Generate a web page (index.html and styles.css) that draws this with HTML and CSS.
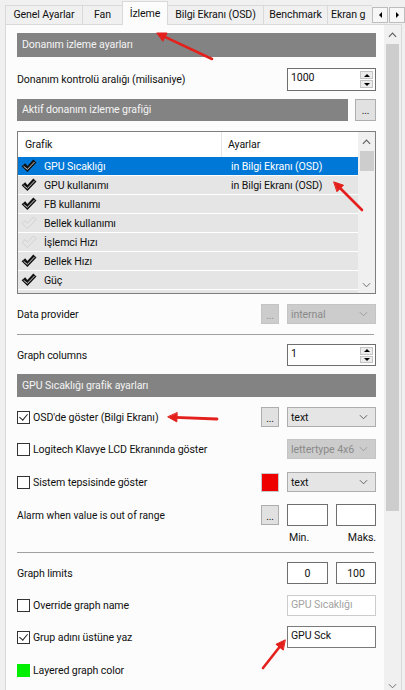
FILE: index.html
```html
<!DOCTYPE html>
<html lang="tr">
<head>
  <meta charset="UTF-8" />
  <meta name="viewport" content="width=device-width, initial-scale=1" />
  <title>İzleme</title>
  <link rel="stylesheet" href="styles.css">
</head>
<body>
  <svg width="0" height="0" class="defs">
    <symbol id="tick" viewBox="0 0 16 14">
      <path d="M0.6 7.2 L4.2 4.2 L6.4 6.9 L12.3 0.6 L15.5 3.5 L6.4 13 Z" fill="#111"/>
      <path d="M2.6 7.3 L6.4 10.4 L13.6 2.9" fill="none" stroke="#fff" stroke-width="0.8"/>
    </symbol>
    <symbol id="tick-off" viewBox="0 0 16 14">
      <path d="M1 7.3 L4.2 4.6 L6.4 7.3 L12.3 1 L15.1 3.5 L6.4 12.5 Z" fill="none" stroke="#cfcfcf" stroke-width="0.9"/>
    </symbol>
    <symbol id="chev-down" viewBox="0 0 10 6">
      <path d="M1 1 L5 5 L9 1" fill="none" stroke="currentColor" stroke-width="1"/>
    </symbol>
    <symbol id="chev-up" viewBox="0 0 10 6">
      <path d="M1 5 L5 1 L9 5" fill="none" stroke="currentColor" stroke-width="1.3"/>
    </symbol>
  </svg>

  <div class="window">
    <div class="tabbar">
      <div class="tabs">
        <div class="tab w-genel first">Genel Ayarlar</div>
        <div class="tab w-fan">Fan</div>
        <div class="tab w-izleme active">İzleme</div>
        <div class="tab w-osd">Bilgi Ekranı (OSD)</div>
        <div class="tab w-bench">Benchmark</div>
        <div class="tab w-ekran">Ekran g</div>
      </div>
      <div class="tab-arrows">
        <span class="tab-arrow"><i class="tri-left"></i></span>
        <span class="tab-arrow"><i class="tri-right"></i></span>
      </div>
    </div>

    <div class="panel">
      <div class="content">
        <div class="section s-first">Donanım izleme ayarları</div>

        <div class="row r-interval">
          <span class="label">Donanım kontrolü aralığı (milisaniye)</span>
          <div class="spin">
            <span>1000</span>
            <div class="spin-btns">
              <span class="spin-btn"><i class="tri-up"></i></span>
              <span class="spin-btn"><i class="tri-down"></i></span>
            </div>
          </div>
        </div>

        <div class="row r-bar">
          <div class="section grow">Aktif donanım izleme grafiği</div>
          <span class="dots big">...</span>
        </div>

        <div class="list">
          <div class="list-main">
            <div class="list-head">
              <span class="col-a">Grafik</span>
              <span class="col-b">Ayarlar</span>
            </div>
            <div class="item selected">
              <span class="tick"><svg width="16" height="14"><use href="#tick"/></svg></span>
              <span class="name">GPU Sıcaklığı</span>
              <span class="set">in Bilgi Ekranı (OSD)</span>
            </div>
            <div class="item">
              <span class="tick"><svg width="16" height="14"><use href="#tick"/></svg></span>
              <span class="name">GPU kullanımı</span>
              <span class="set">in Bilgi Ekranı (OSD)</span>
            </div>
            <div class="item">
              <span class="tick"><svg width="16" height="14"><use href="#tick"/></svg></span>
              <span class="name">FB kullanımı</span>
              <span class="set"></span>
            </div>
            <div class="item">
              <span class="tick"><svg width="16" height="14"><use href="#tick-off"/></svg></span>
              <span class="name">Bellek kullanımı</span>
              <span class="set"></span>
            </div>
            <div class="item">
              <span class="tick"><svg width="16" height="14"><use href="#tick-off"/></svg></span>
              <span class="name">İşlemci Hızı</span>
              <span class="set"></span>
            </div>
            <div class="item">
              <span class="tick"><svg width="16" height="14"><use href="#tick"/></svg></span>
              <span class="name">Bellek Hızı</span>
              <span class="set"></span>
            </div>
            <div class="item">
              <span class="tick"><svg width="16" height="14"><use href="#tick"/></svg></span>
              <span class="name">Güç</span>
              <span class="set"></span>
            </div>
            <div class="item">
              <span class="tick"><svg width="16" height="14"><use href="#tick-off"/></svg></span>
            </div>
          </div>
          <div class="list-sb">
            <span class="sb-btn top"><svg width="9" height="6"><use href="#chev-up"/></svg></span>
            <span class="sb-thumb"></span>
            <span class="sb-btn bottom"><svg width="9" height="6"><use href="#chev-down"/></svg></span>
          </div>
        </div>

        <div class="row r-provider">
          <span class="label">Data provider</span>
          <div class="tools">
            <span class="dots off">...</span>
            <div class="combo off">internal<svg width="9" height="6"><use href="#chev-down"/></svg></div>
          </div>
        </div>

        <div class="sep s-a"></div>

        <div class="row r-columns">
          <span class="label">Graph columns</span>
          <div class="spin">
            <span>1</span>
            <div class="spin-btns">
              <span class="spin-btn"><i class="tri-up"></i></span>
              <span class="spin-btn"><i class="tri-down"></i></span>
            </div>
          </div>
        </div>

        <div class="section s-graph">GPU Sıcaklığı grafik ayarları</div>

        <div class="row r-osd">
          <label class="check-label"><span class="check on"></span>OSD'de göster (Bilgi Ekranı)</label>
          <div class="tools">
            <span class="dots">...</span>
            <div class="combo">text<svg width="9" height="6"><use href="#chev-down"/></svg></div>
          </div>
        </div>

        <div class="row r-lcd">
          <label class="check-label"><span class="check"></span>Logitech Klavye LCD Ekranında göster</label>
          <div class="tools">
            <div class="combo off">lettertype 4x6<svg width="9" height="6"><use href="#chev-down"/></svg></div>
          </div>
        </div>

        <div class="row r-tray">
          <label class="check-label"><span class="check"></span>Sistem tepsisinde göster</label>
          <div class="tools">
            <span class="swatch red"></span>
            <div class="combo">text<svg width="9" height="6"><use href="#chev-down"/></svg></div>
          </div>
        </div>

        <div class="row r-alarm">
          <span class="label small">Alarm when value is out of range</span>
          <div class="tools">
            <span class="dots">...</span>
            <div class="pair">
              <span class="box"></span>
              <span class="box"></span>
            </div>
          </div>
        </div>
        <div class="row r-minmax">
          <div class="minmax"><span>Min.</span><span>Maks.</span></div>
        </div>

        <div class="sep s-b"></div>

        <div class="row r-limits">
          <span class="label">Graph limits</span>
          <div class="pair">
            <span class="box center">0</span>
            <span class="box center">100</span>
          </div>
        </div>

        <div class="row r-override">
          <label class="check-label"><span class="check"></span>Override graph name</label>
          <span class="field off">GPU Sıcaklığı</span>
        </div>

        <div class="row r-group">
          <label class="check-label"><span class="check on"></span>Grup adını üstüne yaz</label>
          <span class="field">GPU Sck</span>
        </div>

        <div class="row r-layer">
          <label class="check-label"><span class="swatch green"></span>Layered graph color</label>
        </div>
      </div>

      <div class="vscroll">
        <span class="sb-btn"><svg width="9" height="6"><use href="#chev-up"/></svg></span>
        <span class="vthumb"></span>
        <span class="sb-btn end"><svg width="9" height="6"><use href="#chev-down"/></svg></span>
      </div>
    </div>

    <svg class="marks" width="405" height="690" viewBox="0 0 405 690">
      <g fill="#e3201c" stroke="#e3201c" stroke-linecap="round">
        <line x1="212" y1="59" x2="163.3" y2="36.1" stroke-width="2.6"/>
        <polygon points="157,33 167.1,33 163,41" stroke-width="1"/>
        <line x1="362" y1="210" x2="339" y2="187" stroke-width="2.6"/>
        <polygon points="334,182 343.5,185.2 337.2,191.5" stroke-width="1"/>
        <line x1="217" y1="419" x2="175" y2="417.3" stroke-width="2.8"/>
        <polygon points="168,417 176.8,421.9 177.2,412.9" stroke-width="1"/>
        <line x1="263" y1="668" x2="280.7" y2="645.5" stroke-width="2.6"/>
        <polygon points="285,640 275.9,644.3 283,649.9" stroke-width="1"/>
      </g>
    </svg>
  </div>
</body>
</html>
```

FILE: styles.css
```css
body {
  margin: 0;
  background: #f0f0f0;
  font-family: Roboto, "Liberation Sans", sans-serif;
  font-size: 10.6px;
  letter-spacing: -0.1px;
  color: #111;
}
.defs {
  position: absolute;
}
.window {
  position: relative;
  width: 405px;
  height: 690px;
  overflow: hidden;
}

/* tabs */
.tabbar {
  height: 25px;
  display: flex;
  position: relative;
  z-index: 2;
  padding-left: 5px;
}
.tabs {
  display: flex;
  align-items: flex-end;
  width: 367px;
  overflow: hidden;
}
.tab {
  flex: none;
  box-sizing: border-box;
  height: 19px;
  line-height: 18px;
  margin-bottom: 1px;
  margin-left: -1px;
  text-align: center;
  white-space: nowrap;
  border: 1px solid #d9d9d9;
  border-bottom: none;
  background: #f0f0f0;
}
.tab.first {
  margin-left: 0;
}
.tab.active {
  height: 24px;
  line-height: 24px;
  margin-bottom: 0;
  background: #fcfcfc;
  padding-bottom: 2px;
}
.w-genel { width: 78px; }
.w-fan { width: 41px; }
.w-izleme { width: 46px; }
.w-osd { width: 97px; }
.w-bench { width: 65px; }
.w-ekran { width: 46px; text-align: left; padding-left: 3px; }
.tab-arrows {
  display: flex;
  gap: 1px;
  padding-top: 7px;
}
.tab-arrow {
  width: 14px;
  height: 14px;
  border: 1px solid #bdbdbd;
  background: #f7f7f7;
  display: flex;
  align-items: center;
  justify-content: center;
}
.tri-left, .tri-right, .tri-up, .tri-down {
  width: 0;
  height: 0;
  border: 3px solid transparent;
}
.tri-left { border-right-color: #000; border-left-width: 0; }
.tri-right { border-left-color: #000; border-right-width: 0; }
.tri-up { border-bottom-color: #000; border-top-width: 0; }
.tri-down { border-top-color: #000; border-bottom-width: 0; }

/* panel */
.panel {
  margin-top: -1px;
  margin-left: 5px;
  width: 395px;
  height: 669px;
  border: 1px solid #d9d9d9;
  background: #fcfcfc;
  display: flex;
}
.content {
  width: 359px;
  padding: 0 8px 0 11px;
}
.vscroll {
  width: 17px;
  background: #f0f0f0;
  display: flex;
  flex-direction: column;
  align-items: center;
  color: #606060;
}
.vscroll .sb-btn {
  height: 19px;
}
.vscroll .sb-btn.end {
  height: 17px;
  margin-top: auto;
}
.vthumb {
  width: 13px;
  height: 467px;
  background: #cdcdcd;
}
.sb-btn {
  display: flex;
  align-items: center;
  justify-content: center;
  width: 17px;
}

.section {
  height: 24px;
  line-height: 24px;
  padding-left: 5px;
  background: #838383;
  color: #f4f4f4;
  white-space: nowrap;
}
.s-first { margin-top: 8px; }
.s-graph { margin-top: 8px; height: 23px; line-height: 23px; }
.grow {
  flex: 1;
  height: 22px;
  line-height: 22px;
}

.row {
  display: flex;
  align-items: center;
  justify-content: space-between;
}
.label {
  white-space: nowrap;
}
.label.small {
  font-size: 10.2px;
  letter-spacing: 0;
}
.r-interval { margin-top: 11px; height: 23px; }
.r-bar { margin-top: 8px; height: 22px; gap: 7px; }
.r-provider { margin-top: 10px; height: 20px; }
.r-columns { margin-top: 9px; height: 22px; }
.r-osd { margin-top: 10px; height: 20px; }
.r-lcd { margin-top: 12px; height: 20px; }
.r-tray { margin-top: 13px; height: 20px; }
.r-alarm { margin-top: 12px; height: 22px; }
.r-minmax { margin-top: 5px; height: 13px; justify-content: flex-end; }
.r-limits { margin-top: 9px; height: 22px; }
.r-override { margin-top: 11px; height: 21px; }
.r-group { margin-top: 10px; height: 22px; }
.r-layer { margin-top: 12px; height: 20px; }

.sep {
  height: 1px;
  width: 357px;
  background: #a0a0a0;
}
.s-a { margin-top: 10px; }
.s-b { margin-top: 8px; }

/* controls */
.spin {
  box-sizing: border-box;
  width: 89px;
  height: 100%;
  border: 1px solid #6e6e6e;
  background: #fff;
  display: flex;
  justify-content: space-between;
  padding: 1px 1px 1px 3px;
}
.spin span {
  line-height: 15px;
}
.spin-btns {
  display: flex;
  flex-direction: column;
  gap: 1px;
  padding: 1px;
}
.spin-btn {
  box-sizing: border-box;
  width: 13px;
  flex: 1;
  border: 1px solid #c4c4c4;
  background: #ececec;
  display: flex;
  align-items: center;
  justify-content: center;
}
.tools {
  display: flex;
  gap: 8px;
  height: 100%;
  align-items: center;
}
.dots {
  box-sizing: border-box;
  width: 18px;
  height: 20px;
  border: 1px solid #adadad;
  background: #e1e1e1;
  text-align: center;
  line-height: 22px;
  font-size: 10px;
}
.dots.big {
  width: 21px;
  height: 22px;
}
.dots.off {
  background: #cccccc;
  border-color: #c4c4c4;
  color: #8c8c8c;
}
.combo {
  box-sizing: border-box;
  width: 89px;
  height: 20px;
  border: 1px solid #adadad;
  background: #e5e5e5;
  padding: 0 7px 0 3px;
  display: flex;
  align-items: center;
  justify-content: space-between;
  color: #111;
}
.combo svg {
  color: #555;
}
.combo.off {
  background: #cccccc;
  border-color: #c4c4c4;
  color: #8a8a8a;
}
.combo.off svg {
  color: #9a9a9a;
}
.swatch {
  box-sizing: border-box;
  display: inline-block;
  flex: none;
}
.swatch.red {
  width: 18px;
  height: 19px;
  background: #ee0000;
  border: 1px solid #c8c8c8;
}
.swatch.green {
  width: 13px;
  height: 13px;
  background: #00ee00;
  margin-right: 3px;
}
.pair {
  display: flex;
  gap: 8px;
  height: 100%;
}
.box {
  box-sizing: border-box;
  width: 41px;
  height: 100%;
  border: 1px solid #6e6e6e;
  background: #fff;
  display: flex;
  align-items: center;
}
.box + .box {
  width: 40px;
}
.box.center {
  justify-content: center;
}
.minmax {
  width: 89px;
  display: flex;
  justify-content: space-between;
  padding-left: 2px;
  box-sizing: border-box;
}
.field {
  box-sizing: border-box;
  width: 89px;
  height: 100%;
  border: 1px solid #7a7a7a;
  background: #fff;
  padding: 1px 3px;
  line-height: 16px;
}
.field.off {
  border-color: #cccccc;
  color: #a3a3a3;
}
.check-label {
  display: flex;
  align-items: center;
  white-space: nowrap;
}
.check {
  box-sizing: border-box;
  width: 13px;
  height: 13px;
  border: 1px solid #333;
  background: #fff;
  margin-right: 3px;
  position: relative;
}
.check.on::after {
  content: "";
  position: absolute;
  left: 3px;
  top: 0px;
  width: 4px;
  height: 7px;
  border: solid #222;
  border-width: 0 1px 1px 0;
  transform: rotate(40deg);
}

/* list */
.list {
  margin-top: 10px;
  box-sizing: border-box;
  height: 163px;
  border: 1px solid #7e7e7e;
  background: #fff;
  display: flex;
  overflow: hidden;
}
.list-main {
  flex: 1;
}
.list-head {
  height: 25px;
  display: flex;
  align-items: center;
}
.col-a {
  box-sizing: border-box;
  width: 204px;
  padding-left: 7px;
  border-right: 1px solid #e5e5e5;
  height: 100%;
  line-height: 25px;
}
.col-b {
  padding-left: 6px;
}
.item {
  height: 18px;
  margin-bottom: 1px;
  background: #e5e5e5;
  display: flex;
  align-items: center;
}
.item.selected {
  background: #0078d7;
  color: #fff;
}
.tick {
  width: 26px;
  padding-left: 3px;
  box-sizing: border-box;
  display: flex;
}
.name {
  width: 178px;
}
.set {
  padding-left: 9px;
}
.list-sb {
  width: 17px;
  background: #f0f0f0;
  display: flex;
  flex-direction: column;
  align-items: center;
  color: #606060;
}
.list-sb .sb-btn.top {
  height: 19px;
}
.list-sb .sb-btn.bottom {
  height: 17px;
  margin-top: auto;
}
.sb-thumb {
  width: 14px;
  height: 20px;
  background: #cdcdcd;
}

.marks {
  position: absolute;
  left: 0;
  top: 0;
  pointer-events: none;
  z-index: 5;
}
```
